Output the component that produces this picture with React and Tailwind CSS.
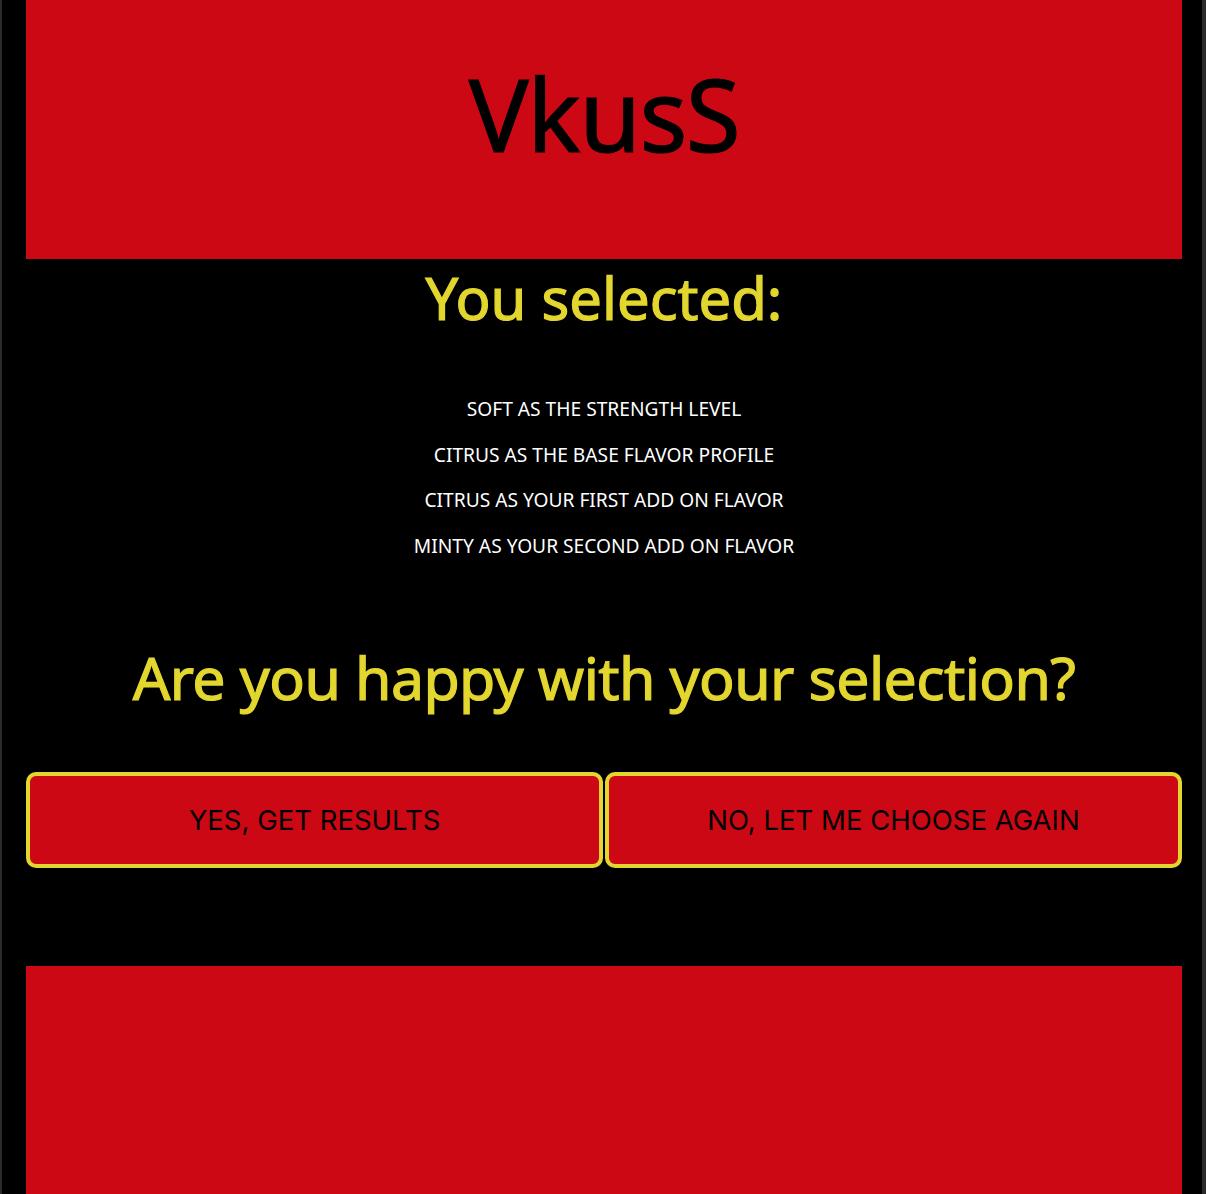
export default function App() {
  const items = [
    "SOFT AS THE STRENGTH LEVEL",
    "CITRUS AS THE BASE FLAVOR PROFILE",
    "CITRUS AS YOUR FIRST ADD ON FLAVOR",
    "MINTY AS YOUR SECOND ADD ON FLAVOR",
  ];
  return (
    <div className="flex min-h-[1194px] w-full bg-black">
      <div className="w-[2px] shrink-0 bg-[#2b2b2b]" />
      <div className="w-[24px] shrink-0" />
      <div className="flex w-[1156px] shrink-0 flex-col bg-black" style={{ fontFamily: '"Noto Sans", sans-serif' }}>
        <header className="flex h-[259px] justify-center bg-[#cb0813] pt-[45px]">
          <h1 className="text-[100px] leading-[136px] font-normal tracking-[-0.015em] text-black [-webkit-text-stroke:1.2px_#000]">VkusS</h1>
        </header>
        <h2 className="text-center text-[58px] leading-[78px] font-normal text-[#e2d62f] [-webkit-text-stroke:1.2px_#e2d62f]">You selected:</h2>
        <ul className="mt-[49px] flex flex-col items-center text-[19.2px] leading-[45.6px] text-white">
          {items.map((t) => (
            <li key={t}>{t}</li>
          ))}
        </ul>
        <h2 className="mt-[67px] text-center text-[59px] leading-[84px] font-normal tracking-[-0.01em] text-[#e2d62f] [-webkit-text-stroke:1.2px_#e2d62f]">
          Are you happy with your selection?
        </h2>
        <div className="mt-[53px] flex gap-[2px]" style={{ fontFamily: 'Inter, sans-serif' }}>
          <button className="flex h-[96px] flex-1 items-center justify-center rounded-[10px] border-[4px] border-[#e2d62f] bg-[#cb0813] text-[27.5px] text-black">
            YES, GET RESULTS
          </button>
          <button className="flex h-[96px] flex-1 items-center justify-center rounded-[10px] border-[4px] border-[#e2d62f] bg-[#cb0813] text-[27.5px] text-black">
            NO, LET ME CHOOSE AGAIN
          </button>
        </div>
        <footer className="mt-[98px] flex-1 bg-[#cb0813]" />
      </div>
      <div className="w-[20px] shrink-0" />
      <div className="w-[4px] shrink-0 bg-[#2b2b2b]" />
    </div>
  );
}
